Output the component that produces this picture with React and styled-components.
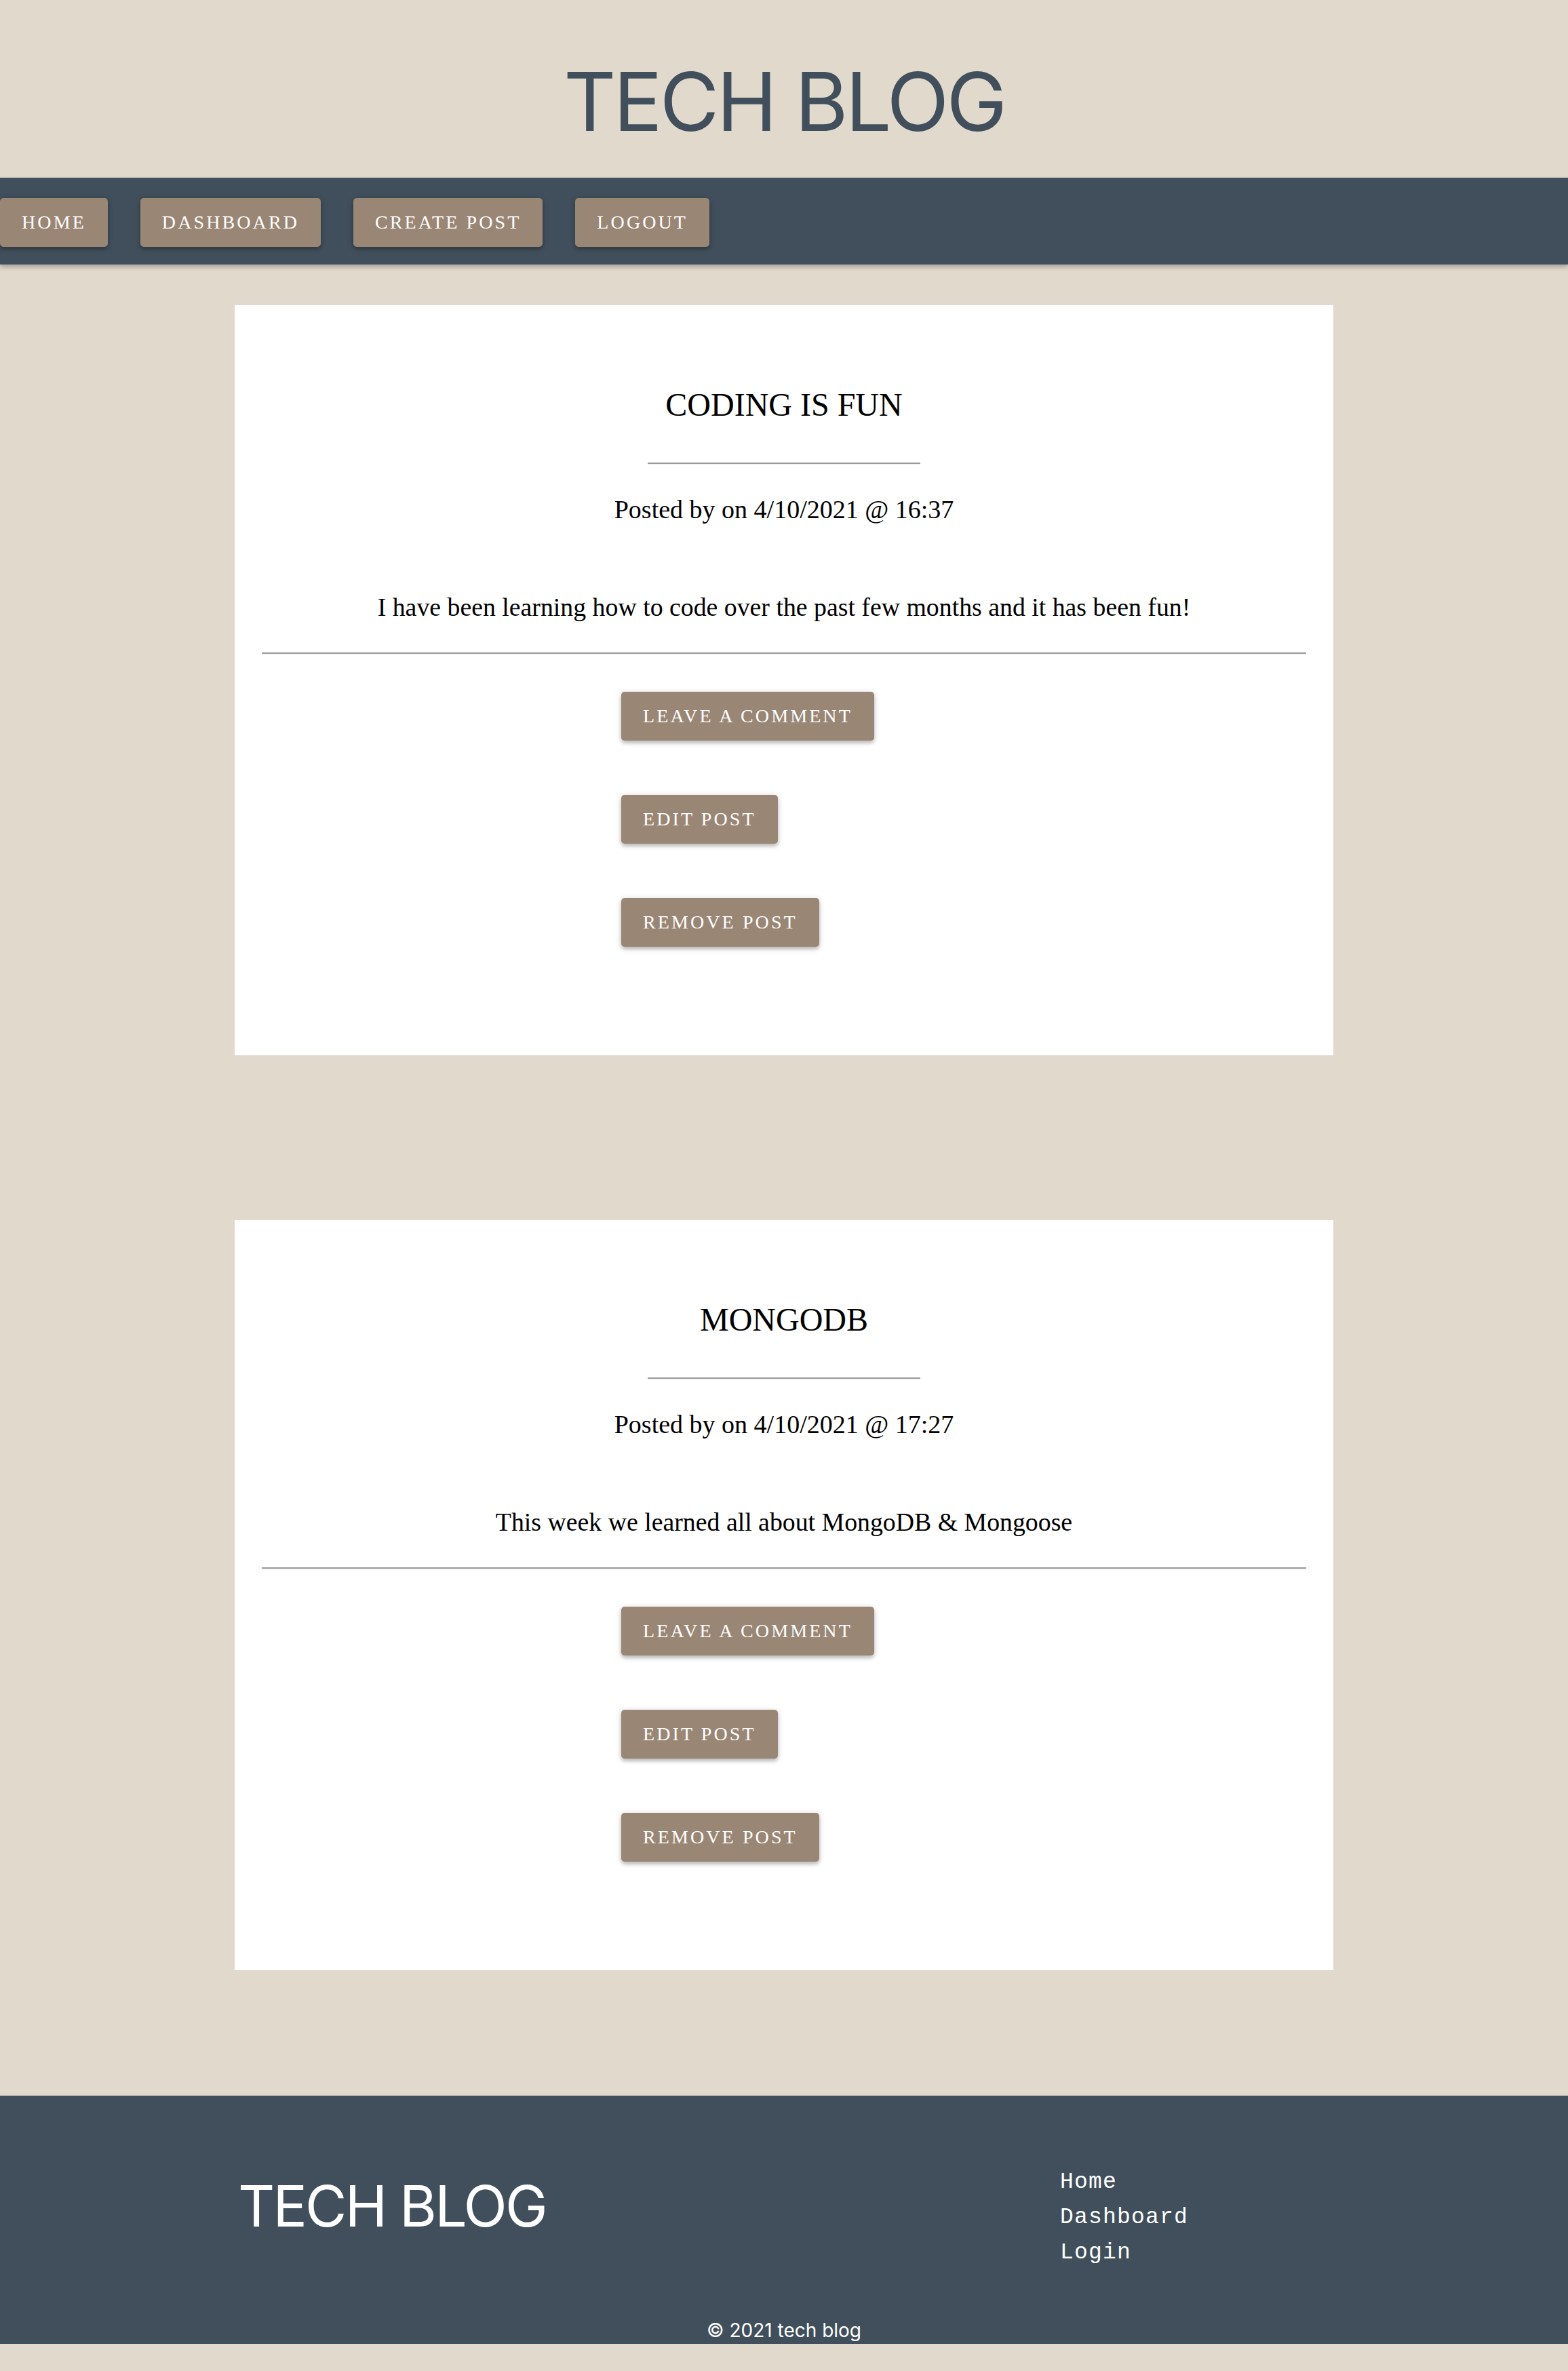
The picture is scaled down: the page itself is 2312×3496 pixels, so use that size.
import React from 'react';
import styled, { createGlobalStyle } from 'styled-components';

const GlobalStyle = createGlobalStyle`
  body {
    margin: 0;
    background: #e2d9cd;
    font-family: "Liberation Serif", "Times New Roman", serif;
  }
`;

const Header = styled.header`
  padding: 90px 0 52px;
  text-align: center;
`;

const Title = styled.h1`
  margin: 0;
  font-family: Inter, "Liberation Sans", sans-serif;
  font-weight: 400;
  font-size: 120px;
  line-height: 120px;
  letter-spacing: -3.8px;
  color: #404f5b;
`;

const Nav = styled.nav`
  display: flex;
  align-items: flex-start;
  gap: 48px;
  height: 128px;
  box-sizing: border-box;
  padding-top: 30px;
  background: #404f5b;
  box-shadow: 0 4px 6px rgba(0, 0, 0, 0.25);
`;

const Button = styled.a`
  display: inline-flex;
  align-items: center;
  height: 72px;
  padding: 0 32px;
  box-sizing: border-box;
  background: #9a8675;
  color: #fff;
  border-radius: 5px;
  font-size: 28px;
  letter-spacing: 3.1px;
  text-transform: uppercase;
  text-decoration: none;
  cursor: pointer;
  box-shadow: 0 4px 4px rgba(0, 0, 0, 0.14), 0 2px 10px rgba(0, 0, 0, 0.2);
`;

const Main = styled.main`
  display: flex;
  flex-direction: column;
  gap: 243px;
  padding: 60px 0 185px;
`;

const Card = styled.article`
  width: 1620px;
  margin: 0 auto;
  box-sizing: border-box;
  padding: 119px 40px 160px;
  background: #fff;
  color: #000;
  text-align: center;
`;

const PostTitle = styled.h2`
  margin: 0;
  font-size: 48px;
  line-height: 56px;
  font-weight: 400;
  text-transform: uppercase;
`;

const Rule = styled.hr`
  margin: ${p => p.$top}px auto 0;
  width: ${p => (p.$short ? '402px' : '100%')};
  height: 0;
  border: 0;
  border-top: 2px solid #9b9b9b;
  border-bottom: 1px solid #ededed;
`;

const Meta = styled.p`
  margin: 44px 0 0;
  font-size: 38px;
  line-height: 44px;
`;

const Body = styled.p`
  margin: 100px 0 0;
  font-size: 37.8px;
  line-height: 44px;
`;

const Actions = styled.div`
  display: flex;
  flex-direction: column;
  align-items: flex-start;
  gap: 80px;
  width: 480px;
  margin: 55px auto 0;
`;

const Footer = styled.footer`
  background: #404f5b;
  color: #fff;
  padding: 102px 0 5px;
`;

const FooterRow = styled.div`
  display: grid;
  grid-template-columns: 1217px 1fr;
  width: 1620px;
  margin: 0 auto;
`;

const FooterTitle = styled.div`
  margin-top: 19px;
  padding-left: 5px;
  font-family: Inter, "Liberation Sans", sans-serif;
  font-size: 84px;
  line-height: 84px;
  letter-spacing: -2.8px;
`;

const Links = styled.ul`
  list-style: none;
  margin: 0;
  padding: 0;
`;

const LinkItem = styled.li`
  font-family: "Liberation Mono", "Courier New", monospace;
  font-size: 33px;
  line-height: 52px;
  letter-spacing: 1.2px;
`;

const Copy = styled.div`
  margin-top: 73px;
  text-align: center;
  font-family: Inter, "Liberation Sans", sans-serif;
  font-size: 28px;
  line-height: 30px;
`;

const posts = [
  {
    title: 'Coding is fun',
    date: '4/10/2021 @ 16:37',
    body: 'I have been learning how to code over the past few months and it has been fun!',
  },
  {
    title: 'MongoDB',
    date: '4/10/2021 @ 17:27',
    body: 'This week we learned all about MongoDB & Mongoose',
  },
];

function Post({ post }) {
  return (
    <Card>
      <PostTitle>{post.title}</PostTitle>
      <Rule $short $top={57} />
      <Meta>Posted by on {post.date}</Meta>
      <Body>{post.body}</Body>
      <Rule $top={45} />
      <Actions>
        <Button>Leave a comment</Button>
        <Button>Edit post</Button>
        <Button>Remove post</Button>
      </Actions>
    </Card>
  );
}

export default function App() {
  return (
    <>
      <GlobalStyle />
      <Header>
        <Title>TECH BLOG</Title>
      </Header>
      <Nav>
        <Button>Home</Button>
        <Button>Dashboard</Button>
        <Button>Create post</Button>
        <Button>Logout</Button>
      </Nav>
      <Main>
        {posts.map(p => (
          <Post key={p.title} post={p} />
        ))}
      </Main>
      <Footer>
        <FooterRow>
          <FooterTitle>TECH BLOG</FooterTitle>
          <Links>
            <LinkItem>Home</LinkItem>
            <LinkItem>Dashboard</LinkItem>
            <LinkItem>Login</LinkItem>
          </Links>
        </FooterRow>
        <Copy>© 2021 tech blog</Copy>
      </Footer>
    </>
  );
}
